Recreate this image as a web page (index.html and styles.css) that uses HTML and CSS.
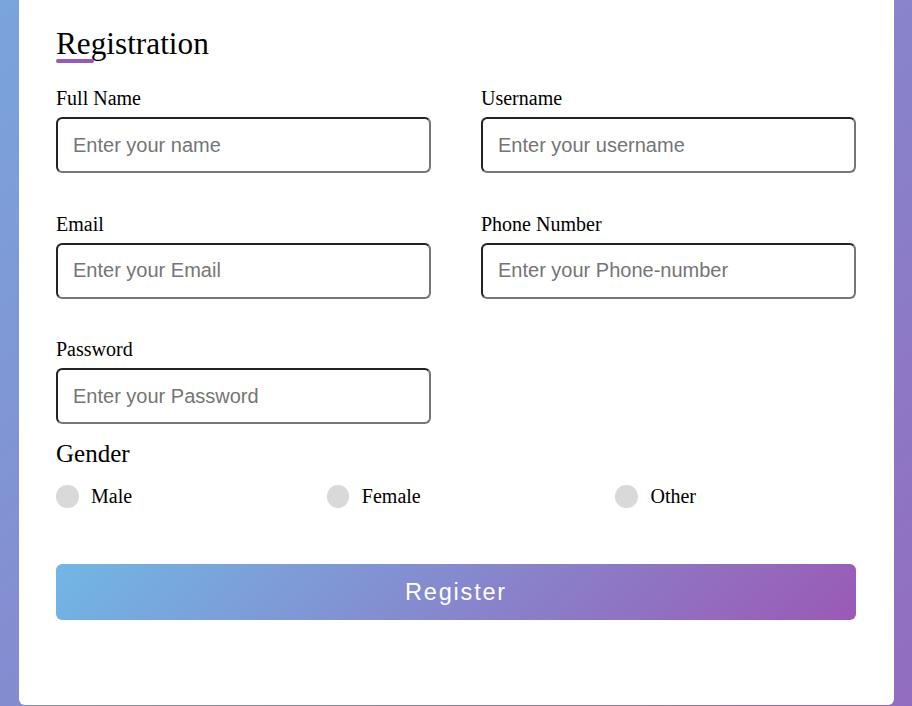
FILE: index.html
```html
<!DOCTYPE html>
<html lang="en">
<head>
<meta charset="utf-8">
<title>Registration</title>
<link rel="stylesheet" href="styles.css">
</head>
<body>
  <div class="container">
    <div class="title">Registration</div>
    <form class="form" action="#">
      <div class="user-details">
        <div class="input-box">
          <span class="details">Full Name</span>
          <input type="text" placeholder="Enter your name">
        </div>
        <div class="input-box">
          <span class="details">Username</span>
          <input type="text" placeholder="Enter your username">
        </div>
        <div class="input-box">
          <span class="details">Email</span>
          <input type="text" placeholder="Enter your Email">
        </div>
        <div class="input-box">
          <span class="details">Phone Number</span>
          <input type="text" placeholder="Enter your Phone-number">
        </div>
        <div class="input-box">
          <span class="details">Password</span>
          <input type="password" placeholder="Enter your Password">
        </div>
      </div>
      <div class="gender-title">Gender</div>
      <div class="category">
        <label class="option"><span class="dot"></span><span>Male</span></label>
        <label class="option"><span class="dot"></span><span>Female</span></label>
        <label class="option"><span class="dot"></span><span>Other</span></label>
      </div>
      <button type="button" class="button">Register</button>
    </form>
  </div>
</body>
</html>
```

FILE: styles.css
```css
* {
  box-sizing: border-box;
}

html, body {
  margin: 0;
  padding: 0;
}

body {
  height: 706px;
  overflow: hidden;
  display: flex;
  justify-content: center;
  align-items: flex-end;
  padding-bottom: 1px;
  background-color: #8a86cb;
  background-image: linear-gradient(135deg, #71b7e6, #9b59b6);
  background-size: 912px 1803px;
  background-position: 0 -543px;
  background-repeat: no-repeat;
  font-family: "Liberation Serif", "Times New Roman", serif;
  color: #000;
}

.container {
  flex: none;
  width: 875px;
  background: #fff;
  border-radius: 6px;
  padding: 31.25px 37.5px 41px;
}

.title {
  position: relative;
  font-size: 31.25px;
  line-height: 36px;
}

.title::before {
  content: "";
  position: absolute;
  left: 0;
  bottom: -0.5px;
  width: 37.5px;
  height: 3.75px;
  border-radius: 5px;
  background: #9b59b6;
}

.form {
  margin: 25px 0 0;
}

.user-details {
  display: grid;
  grid-template-columns: 375px 375px;
  justify-content: space-between;
  row-gap: 39.5px;
  margin-bottom: 15px;
}

.details {
  display: block;
  font-size: 20px;
  line-height: 23px;
  margin-bottom: 7px;
}

.input-box input {
  display: block;
  width: 100%;
  height: 56px;
  border-width: 2px;
  border-style: solid;
  border-color: #232323 #767676 #767676 #232323;
  border-radius: 6.25px;
  padding: 0 15px 0 15px;
  font-family: "Liberation Sans", Arial, sans-serif;
  font-size: 20px;
  color: #000;
  outline: none;
  background: #fff;
}

.input-box input::placeholder {
  color: #757575;
}

.gender-title {
  font-size: 25px;
  line-height: 29px;
}

.category {
  display: flex;
  justify-content: space-between;
  width: 80%;
  margin-top: 17px;
}

.option {
  display: flex;
  align-items: center;
  font-size: 20px;
  line-height: 23px;
}

.dot {
  width: 22.5px;
  height: 22.5px;
  border-radius: 50%;
  background: #d9d9d9;
  margin-right: 12.5px;
}

.button {
  display: block;
  width: 100%;
  height: 56px;
  margin: 56px 0 44px;
  border: none;
  border-radius: 6.25px;
  background: linear-gradient(135deg, #71b7e6, #9b59b6);
  color: #fff;
  font-family: "Liberation Sans", Arial, sans-serif;
  font-size: 23.5px;
  letter-spacing: 1.8px;
  padding: 0;
}
```
